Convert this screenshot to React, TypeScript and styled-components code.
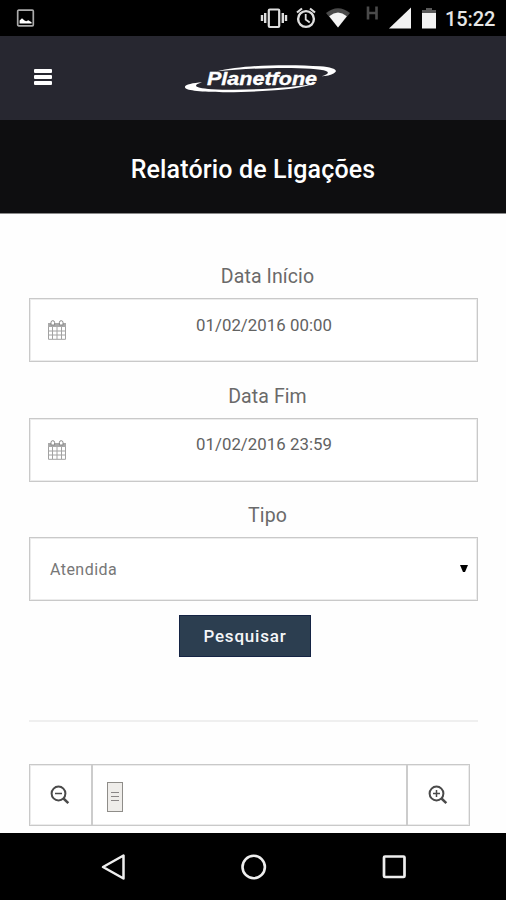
import React from "react";
import styled, { createGlobalStyle } from "styled-components";

const GlobalStyle = createGlobalStyle`
  * { box-sizing: border-box; }
  body { margin: 0; background: #fff; font-family: Roboto, sans-serif; }
  button, select, input { font: inherit; }
  svg { display: block; flex: none; }
`;

const Screen = styled.div`
  width: 506px;
  height: 900px;
  display: flex;
  flex-direction: column;
  overflow: hidden;
  background: #fefefe;
`;

const StatusBar = styled.div`
  height: 36px;
  flex: none;
  display: flex;
  align-items: center;
  justify-content: space-between;
  padding: 0 10px 0 16px;
  background: #000;
`;

const StatusGroup = styled.div`
  display: flex;
  align-items: center;
`;

const Clock = styled.span`
  width: 51px;
  margin-left: 9px;
  padding-top: 2px;
  font-size: 20px;
  line-height: 36px;
  font-weight: 500;
  letter-spacing: -0.1px;
  white-space: nowrap;
  color: #e6e6e6;
`;

const Header = styled.header`
  height: 84px;
  flex: none;
  display: grid;
  grid-template-columns: 183px 1fr;
  align-items: center;
  padding-bottom: 2px;
  background: #272730;
`;

const MenuButton = styled.button`
  width: 18px;
  height: 16px;
  margin: -1px 0 0 34px;
  padding: 0;
  border: 0;
  background: none;
  display: flex;
  flex-direction: column;
  justify-content: space-between;
`;

const MenuBar = styled.span`
  height: 4px;
  width: 18px;
  border-radius: 1px;
  background: #fff;
`;

const TitleBar = styled.div`
  height: 94px;
  flex: none;
  border-bottom: 1px solid #8a8a8a;
  background: #0e0e10;
  display: flex;
  justify-content: center;
`;

const Title = styled.h1`
  margin: 0;
  font-size: 25px;
  line-height: 99px;
  font-weight: 500;
  letter-spacing: 0.15px;
  color: #fff;
`;

const Content = styled.main`
  flex: 1;
  min-height: 0;
  overflow: hidden;
  padding: 48px 28px 0 29px;
`;

const Field = styled.div`
  height: 119.7px;
`;

const Label = styled.label`
  display: block;
  height: 36px;
  padding-left: 28px;
  font-size: 19.5px;
  line-height: 30px;
  letter-spacing: 0.1px;
  text-align: center;
  color: #6a6a6a;
`;

const Control = styled.div<{ $select?: boolean }>`
  height: 64px;
  border: 1px solid #c9c9c9;
  box-shadow: inset 0 0 0 1px #ececec;
  display: flex;
  align-items: center;
  justify-content: space-between;
  padding: 0 ${(p) => (p.$select ? "8px 0 20px" : "17px 0 17px")};
  background: #fff;
`;

const DateValue = styled.span`
  flex: 1;
  padding: 0 0 11px 1px;
  font-size: 16.8px;
  letter-spacing: 0.05px;
  text-align: center;
  color: #626262;
`;

const SelectValue = styled.span`
  font-size: 16px;
  letter-spacing: 0.45px;
  color: #777;
`;

const SubmitButton = styled.button`
  display: block;
  width: 132px;
  height: 42px;
  margin: -6px 0 0 150px;
  padding: 0;
  border: 1px solid #152444;
  background: #2c3e50;
  font-size: 17px;
  font-weight: 500;
  letter-spacing: 0.8px;
  color: #f4f6f8;
`;

const Divider = styled.hr`
  height: 2px;
  margin: 63px 0 42px;
  border: 0;
  background: #efefef;
`;

const ZoomBar = styled.div`
  width: 441px;
  height: 62px;
  display: grid;
  grid-template-columns: 61px 317px 1fr;
  border: 1px solid #c9c9c9;
  box-shadow: inset 0 0 0 1px #ececec;
  background: #fff;
`;

const ZoomCell = styled.div`
  display: flex;
  align-items: center;
  justify-content: center;
  padding-right: 2px;
`;

const ZoomTrack = styled.div`
  display: flex;
  align-items: center;
  padding: 3px 0 0 14px;
  border: solid #ccc;
  border-width: 0 2px;
`;

const ZoomThumb = styled.div`
  width: 16px;
  height: 30px;
  border: 1px solid #8f8d89;
  background: #efedea;
  display: flex;
  flex-direction: column;
  align-items: center;
  justify-content: center;
  gap: 3px;
`;

const Grip = styled.span`
  width: 8px;
  height: 1px;
  background: #8a8686;
`;

const NavBar = styled.nav`
  height: 67px;
  flex: none;
  display: flex;
  align-items: center;
  gap: 113px;
  padding-left: 100px;
  background: #000;
`;

function PictureIcon() {
  return (
    <svg width="19" height="18" viewBox="0 0 19 18">
      <rect x="1.7" y="1.2" width="15.6" height="15.6" rx="1" fill="none" stroke="#aaa" strokeWidth="1.7" />
      <path d="M3.6 14.5V11.5L6 9.2L8.5 11.6L10.2 12.2L12.3 11.3L15.6 13.2V14.5Z" fill="#fff" />
    </svg>
  );
}

function StatusIcons() {
  return (
    <svg width="176" height="30" viewBox="260 3 176 30">
      <g fill="none" stroke="#dedede">
        <rect x="268.8" y="9.5" width="10.4" height="17.5" rx="1" strokeWidth="2.2" />
        <path d="M265.2 13v10M282.8 13v10M262 15v6M286 15v6" strokeWidth="2.4" />
        <circle cx="306" cy="19" r="7.9" strokeWidth="2.4" />
        <path d="M305.7 14v5.5l4 3" strokeWidth="1.8" />
        <path d="M297 12.5l5-4M315 12.5l-5-4" strokeWidth="2.2" />
      </g>
      <path d="M326 13Q338 3.5 350 13L338 27.5Z" fill="#4a4a4a" />
      <path d="M329.2 16.2Q338 9 346.8 16.2L338 27.5Z" fill="#f4f4f4" />
      <path d="M368 6.5v13M376.5 6.5v13M367 13h10" fill="none" stroke="#4a4a4a" strokeWidth="2.6" />
      <path d="M389 28.5L411 7.5v21Z" fill="#f2f2f2" />
      <path d="M426 8h6v2h4v5h-14v-5h4Z" fill="#5a5a5a" />
      <path d="M422 13h14v15.5h-14Z" fill="#f2f2f2" />
    </svg>
  );
}

function Logo() {
  return (
    <svg width="154" height="36" viewBox="183 58 154 36" role="img" aria-label="Planetfone">
      <path
        d="M216 70.5C245 63.5 292 63.2 320 65.3C334 66.4 339 69.5 334 72.2C331 74.2 326 75 321.5 75.2C327 73.7 330 71.8 326 70C316 66 259 65.7 216 70.5Z"
        fill="#fff"
      />
      <path
        d="M202 81.3C192 82 182.5 84 185.5 87.2C192 92.5 250 92 286 88.3C301 86.5 309 84.8 315 82.5C293 87 245 90 212 88.2C194 87 192 84.5 202 81.3Z"
        fill="#fff"
      />
      <text
        x="207"
        y="84"
        fill="#fff"
        stroke="#fff"
        strokeWidth="0.35"
        fontFamily="'Liberation Sans', Arial, sans-serif"
        fontSize="17.5"
        fontWeight="700"
        fontStyle="italic"
        textLength="110"
        lengthAdjust="spacingAndGlyphs"
      >
        Planetfone
      </text>
    </svg>
  );
}

function CalendarIcon() {
  return (
    <svg width="20" height="22" viewBox="0 0 20 22">
      <path
        d="M1.5 4v16.3h17V4M5.5 8v12M10 8v12M14.5 8v12M1.5 12h17M1.5 16h17"
        fill="none"
        stroke="#a2a2a2"
        strokeWidth="1"
      />
      <path d="M1 4h18v4H1Z" fill="#aaa" />
      <path d="M4 6V3.5a1.8 1.8 0 0 1 3.6 0V6ZM12.4 6V3.5a1.8 1.8 0 0 1 3.6 0V6Z" fill="#fff" stroke="#888" />
    </svg>
  );
}

function MagnifierIcon({ plus }: { plus?: boolean }) {
  return (
    <svg width="20" height="20" viewBox="0 0 20 20" fill="none" stroke="#4a4a4a">
      <circle cx="8.5" cy="8.5" r="6.9" strokeWidth="2" />
      <path d="M13.5 13.5l4.8 4.6" strokeWidth="2.5" />
      <path d={plus ? "M5 8.5h7M8.5 5v7" : "M5 8.5h7"} strokeWidth="1.5" />
    </svg>
  );
}

function DateField({ label, value }: { label: string; value: string }) {
  return (
    <Field>
      <Label>{label}</Label>
      <Control>
        <CalendarIcon />
        <DateValue>{value}</DateValue>
      </Control>
    </Field>
  );
}

export default function App() {
  return (
    <>
      <GlobalStyle />
      <Screen>
        <StatusBar>
          <PictureIcon />
          <StatusGroup>
            <StatusIcons />
            <Clock>15:22</Clock>
          </StatusGroup>
        </StatusBar>
        <Header>
          <MenuButton aria-label="Menu">
            <MenuBar />
            <MenuBar />
            <MenuBar />
          </MenuButton>
          <Logo />
        </Header>
        <TitleBar>
          <Title>Relatório de Ligações</Title>
        </TitleBar>
        <Content>
          <DateField label="Data Início" value="01/02/2016 00:00" />
          <DateField label="Data Fim" value="01/02/2016 23:59" />
          <Field>
            <Label>Tipo</Label>
            <Control $select>
              <SelectValue>Atendida</SelectValue>
              <svg width="10" height="10" viewBox="0 0 10 10">
                <path d="M1 1h8L6 8H4Z" fill="#000" />
              </svg>
            </Control>
          </Field>
          <SubmitButton>Pesquisar</SubmitButton>
          <Divider />
          <ZoomBar>
            <ZoomCell>
              <MagnifierIcon />
            </ZoomCell>
            <ZoomTrack>
              <ZoomThumb>
                <Grip />
                <Grip />
                <Grip />
              </ZoomThumb>
            </ZoomTrack>
            <ZoomCell>
              <MagnifierIcon plus />
            </ZoomCell>
          </ZoomBar>
        </Content>
        <NavBar>
          <svg width="27" height="30" viewBox="0 0 27 30">
            <path d="M3 15L23.5 3.5v23Z" fill="none" stroke="#eee" strokeWidth="2.5" strokeLinejoin="round" />
          </svg>
          <svg width="27" height="30" viewBox="0 0 27 30">
            <circle cx="13.7" cy="15" r="11.2" fill="none" stroke="#eee" strokeWidth="2.6" />
          </svg>
          <svg width="27" height="30" viewBox="0 0 27 30">
            <rect x="4" y="4.5" width="20.5" height="20.5" rx="1" fill="none" stroke="#eee" strokeWidth="2.7" />
          </svg>
        </NavBar>
      </Screen>
    </>
  );
}
